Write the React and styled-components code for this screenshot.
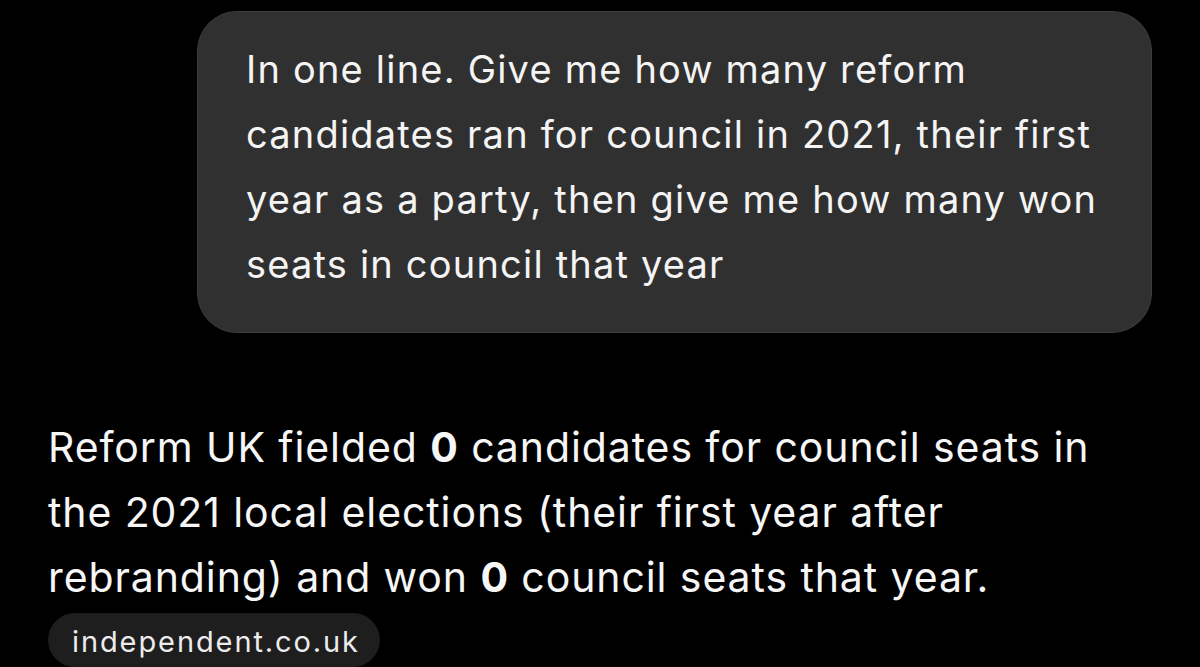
import React from 'react';
import styled, { createGlobalStyle } from 'styled-components';

const GlobalStyle = createGlobalStyle`
  html, body {
    margin: 0;
    padding: 0;
    background: #000;
  }
  body {
    font-family: Inter, "Noto Sans", sans-serif;
    color: #fff;
    -webkit-font-smoothing: antialiased;
  }
`;

const Screen = styled.div`
  width: 1200px;
  height: 667px;
  overflow: hidden;
  background: #000;
  display: flex;
  flex-direction: column;
`;

const UserRow = styled.div`
  display: flex;
  justify-content: flex-end;
  padding: 11px 48px 0 0;
`;

const Bubble = styled.div`
  box-sizing: border-box;
  width: 955px;
  height: 322px;
  padding: 25px 40px 0 48px;
  background: #303030;
  border: 1px solid #3c3c3c;
  border-radius: 40px;
  font-size: 38px;
  line-height: 65px;
  letter-spacing: 1.2px;
  color: #f4f4f4;
`;

const Answer = styled.div`
  padding: 82px 60px 0 48px;
  font-size: 41px;
  line-height: 65px;
  letter-spacing: 0.9px;
  color: #f6f6f6;

  b {
    font-weight: 700;
  }
`;

const Source = styled.div`
  margin: 3px 0 0 48px;
  align-self: flex-start;
  box-sizing: border-box;
  width: 332px;
  height: 60px;
  padding: 12px 0 0 24px;
  background: #1e1e1e;
  border-radius: 27px;
  font-size: 29px;
  line-height: 34px;
  letter-spacing: 1.9px;
  color: #ececec;
`;

export default function App() {
  return (
    <Screen>
      <GlobalStyle />
      <UserRow>
        <Bubble>
          In one line. Give me how many reform candidates ran for council in 2021, their first
          year as a party, then give me how many won seats in council that year
        </Bubble>
      </UserRow>
      <Answer>
        Reform UK fielded <b>0</b> candidates for council seats in the 2021 local elections
        (their first year after rebranding) and won <b>0</b> council seats that year.
      </Answer>
      <Source>independent.co.uk</Source>
    </Screen>
  );
}
